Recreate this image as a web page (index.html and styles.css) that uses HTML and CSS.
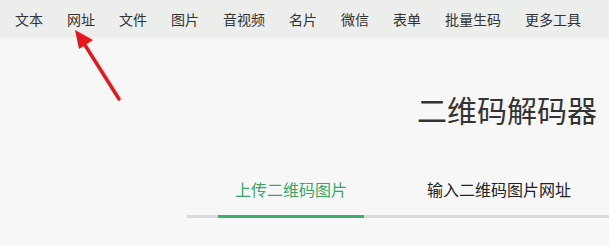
FILE: index.html
```html
<!DOCTYPE html>
<html lang="zh">
<head>
<meta charset="utf-8">
<title>二维码解码器</title>
<link rel="stylesheet" href="styles.css">
</head>
<body>
<nav class="topnav">
  <a class="nav-item">文本</a>
  <a class="nav-item">网址</a>
  <a class="nav-item">文件</a>
  <a class="nav-item">图片</a>
  <a class="nav-item">音视频</a>
  <a class="nav-item">名片</a>
  <a class="nav-item">微信</a>
  <a class="nav-item">表单</a>
  <a class="nav-item">批量生码</a>
  <a class="nav-item">更多工具</a>
</nav>
<main class="page">
  <h1 class="title">二维码解码器</h1>
  <div class="tabs">
    <div class="tab tab-active">上传二维码图片</div>
    <div class="tab">输入二维码图片网址</div>
  </div>
</main>
<svg class="annotation" width="60" height="80" viewBox="0 0 60 80">
  <line x1="49" y1="72" x2="13" y2="15" stroke="#e8161b" stroke-width="3.5" stroke-linecap="round"/>
  <polygon points="5,3 23,13 9,22" fill="#e8161b"/>
</svg>
</body>
</html>
```
FILE: styles.css
```css
html, body {
  margin: 0;
  padding: 0;
}
body {
  width: 609px;
  height: 246px;
  overflow: hidden;
  background: #f6f7f6;
  font-family: "Noto Sans CJK SC", "Noto Sans", sans-serif;
  color: #333;
  position: relative;
}
.topnav {
  display: flex;
  align-items: center;
  height: 38px;
  padding-left: 3px;
  background: #eceeec;
}
.nav-item {
  padding: 0 12px;
  font-size: 14px;
  line-height: 20px;
  color: #333;
}
.page {
  display: flex;
  flex-direction: column;
}
.title {
  margin: 51px 12px 0 0;
  align-self: flex-end;
  font-size: 30px;
  font-weight: normal;
  line-height: 40px;
  color: #333;
}
.tabs {
  display: flex;
  margin: 43px 0 0 187px;
  padding-left: 31px;
  border-bottom: 3px solid #d6dad8;
}
.tab {
  padding: 0 17px 9px;
  font-size: 16px;
  line-height: 34px;
  color: #222;
}
.tab-active {
  color: #3aa567;
  margin-bottom: -3px;
  border-bottom: 3px solid #3daf6a;
}
.tab + .tab {
  margin-left: 46px;
}
.annotation {
  position: absolute;
  left: 70px;
  top: 27px;
}
```
